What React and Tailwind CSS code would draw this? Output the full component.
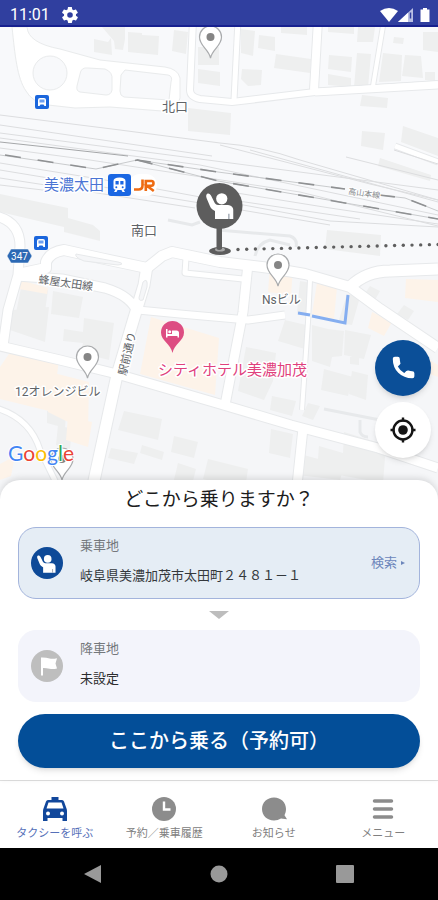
import React from "react";

const FONT = "font-['Roboto','Noto_Sans_CJK_JP',sans-serif]";

/* Streets, drawn twice: a grey casing first, then the white surface. */
const STREETS = [
  { d: "M0 346 L60 360 L117 374 L220 404 L291 425 L378 448 L438 468", w: 9 },
  { d: "M147 266 L144 285 L134 318 L117 375 L92 490", w: 11 },
  { d: "M-4 216 Q20 222 20 246 L18 275 L8 310 L3 346", w: 9 },
  { d: "M18 274 L46 268 L46 262 Q50 252 64 250 L100 258 L147 268 L162 256 L172 252 L220 262 L270 268 L305 274 L350 287 L380 309 L438 348", w: 10 },
  { d: "M350 287 Q366 271 390 271 L438 269", w: 11 },
  { d: "M16 276 L62 279 L105 288 Q132 296 138 314", w: 9 },
  { d: "M138 310 L180 314 L248 320 L285 315", w: 7 },
  { d: "M248 264 L243 312 L225 405", w: 9 },
  { d: "M186 258 L185 273 L243 279", w: 5 },
  { d: "M303 428 L296 495", w: 9 },
  { d: "M310 280 L308 322 L302 410", w: 4 },
  { d: "M-4 408 Q30 418 40 450 L62 495", w: 5 },
  { d: "M193 20 L190 90 Q190 97 200 99 L232 102 L315 92 L438 84", w: 6 },
  { d: "M315 92 L438 85", w: 7 },
  { d: "M238 20 L234 100", w: 5 },
  { d: "M318 20 L314 90", w: 8 },
  { d: "M384 20 L373 86", w: 4 },
  { d: "M395 146 L438 162", w: 5 },
];

const BUILDINGS =
  "M94 39l14 3 3-4 1 17-18-3z M102 27h23v12l-2 11-8-1-1-8z M128 32l14 1v2l17 1-1 19-30-3z M174 30l14 2-2 22-14-3z M198 47h21v18h-21z M198 69l22 3v14l-22-3z" +
  " M241 29l14 2-2 25-12-3z M259 35l16 2v14l-17-3z M276 54l35 5-1 14-36-5z M242 69l20 1-1 15-13 1-7-7z M281 27h26v8l-26-2z M328 27h26v7l-26-2z M358 27h17l-2 15h-16z M329 55l23 2-1 15-23-3z M328 74l23 4v9l-23-2z M357 53l14 1-3 34-14-1z M383 53l19 2-1 26-22 1z M405 55l16 1 2 22-21-2z M394 37l10 1-1 6-10-1z M423 32h15v20l-15-2z M425 72h10v9l-10-1z" +
  " M188 108l43 5-1 22-42-4z M362 95l26 3-1 10-27-2z M362 131l23 2-2 17-22-4z M403 126l35 12v18l-37-14z M380 158l51 17-1 6-52-15z" +
  " M0 194l68 14v10l25 7 7 6v10l-36-9v-5L0 212z M327 230l54 5-1 21-55-7z" +
  " M22 283l26 7-6 43-28-12 2-8z M53 291l30 6-4 21-28-4z M12 310l37-3-4 35-38-13z M84 318l30 5-5 37-28-7 2-10-20-2 1-12 19 3z" +
  " M285 320l21 5-1 24-27-8z M312 325l16 4 16 2-2 25-10 1-2 10-18-6z M345 330l26 5-7 24-20-4z M350 357l9-2v10l-9-1z M246 347l30 6-3 28-9 19-26-9z M324 369l29 8-5 19-27-6z M352 371l16 4-2 25-17-6z M272 396l24 5-4 15-22-6z M308 403l12 3-7 14-11-4z" +
  " M124 411l38 8-4 21-40-10z M174 436l24 6-4 16-23-6z M111 448l27 5-4 11-26-6z M142 445l22 7-2 8-22-7z M208 459l40 10-3 20-42-10z M47 411l19 4-1 13-18-5z M58 425l14 4-2 20-14-4z M271 429l22 5-3 24-21-5z M344 432l42 13-3 38-66-12 2-25 24 7z M300 454l44 12-4 14-42-5z M178 463l18 6-4 16-18-5z" +
  " M300 281l12 2-3 32-12-2z M347 294l13 3-8 28-14-2z M370 286l10 5-5 9-11-5z M404 305l10 6-6 9-11-6z";

const COMMERCIAL =
  "M151 317l68 21-4 57-75-21z M20 280l28 8-1 6-28-5z M270 267l23 2-2 26-23-3z M317 283l20 4-3 32-22-5z M406 279l32 1v22l-33-4z M13 348l46 10-6 54-53-13v-32z M50 372l39 10-1 50-40-20z M68 417l24 5-4 25-22-7z M372 312l20 10-8 14-16-8z M0 464l15-8-4 20-11 4z M421 355l17 10v12l-17-6z";

function Person({ x, y, s, fill }) {
  return (
    <g transform={`translate(${x} ${y}) scale(${s})`}>
      <circle cx="12.600" cy="4.600" r="4.500" fill={fill} />
      <path
        d="M.8.8C-.1 1.500.1 3 .5 4.200L3.200 10.600C3.900 12.300 5.200 13.300 7.200 14.400V20.800H21.800V13.500C21.800 11.200 20 9.800 17.600 9.600H9.600C8.600 9.600 7.600 9 7 8L4.200 2.400C3.400.8 2 0 .8.8Z"
        fill={fill}
      />
      <path d="M18.300 16.500V20.800" stroke="#8a93a0" strokeWidth="0.900" />
    </g>
  );
}

function PlacePin({ x, y }) {
  return (
    <g transform={`translate(${x} ${y})`}>
      <path d="M0 20C-2 11-11 8-11-1A11 11 0 0 1 11-1C11 8 2 11 0 20Z" fill="#fff" stroke="#a9abad" strokeWidth="1.2" />
      <circle cy="-1" r="4" fill="#858585" />
    </g>
  );
}

function BusStop({ x, y }) {
  return (
    <g transform={`translate(${x} ${y})`}>
      <rect width="14" height="14" rx="2" fill="#1b66dc" />
      <path d="M3 11V5q0-2 2-2h4q2 0 2 2v6H9.500L8.500 9.500h-3L4.500 11Z" fill="#fff" />
      <rect x="4.500" y="4.500" width="5" height="3" fill="#6d9ff0" />
    </g>
  );
}

function MapDrawing() {
  const dots = Array.from({ length: 24 }, (_, i) => i);
  return (
    <svg
      className={`absolute inset-0 h-full w-full ${FONT}`}
      viewBox="0 27 438 473"
      preserveAspectRatio="xMidYMin slice"
      role="img"
      aria-label="美濃太田駅周辺の地図"
    >
      <rect width="438" height="500" fill="#f8f9fb" />
      <path d="M0 270H438V500H0Z" fill="#f5f6f8" />
      <path d={BUILDINGS} fill="#eeefef" />
      <path d={COMMERCIAL} fill="#fdf3e9" />

      {/* north side rotary */}
      <path d="M12 27C15 55 17 78 26 91Q32 102 48 105L75 108L110 107L175 112L180 98V78Q178 69 165 67L100 60L60 49Q28 43 27 27Z" fill="#fff" stroke="#e9ebec" />
      <g fill="#f8f9fb" stroke="#e9ebec">
        <circle cx="50" cy="73" r="17" />
        <path d="M80 74Q81 67 88 68L105 69Q113 72 112 80V90Q111 95 106 95L80 92Q76 91 77 86Z" />
        <path d="M125 70L168 75Q173 76 171 82L169 100L124 97Q120 96 120 91L121 75Z" />
      </g>

      <g fill="none" stroke="#e7e9eb" strokeLinejoin="round">
        {STREETS.map((r) => <path key={r.d} d={r.d} strokeWidth={r.w + 2} />)}
      </g>
      <g fill="none" stroke="#fff" strokeLinejoin="round">
        {STREETS.map((r) => <path key={r.d} d={r.d} strokeWidth={r.w} />)}
      </g>
      <g fill="#f5f6f8" stroke="#e7e9eb">
        <path d="M76 254L118 262Q126 264 118 265L84 261Q74 257 76 254Z" />
        <path d="M143 282Q148 277 147 287L143 300Q137 302 140 294Z" />
      </g>
      <g fill="none" stroke="#e7e9eb" strokeWidth="3">
        <path d="M168 220L192 225L200 222" />
        <path d="M218 230L290 236Q298 239 296 247" />
        <path d="M255 256Q258 243 270 240L290 245" />
        <path d="M324 409L380 420M360 420V432Q362 437 368 437" />
      </g>

      {/* tracks */}
      <g fill="none" stroke="#dcdddf" strokeWidth="1">
        <path d="M0 115L120 130L220 143Q260 146 300 160L438 200" />
        <path d="M0 125L212 156" />
        <path d="M0 133L438 190" />
        <path d="M0 138L200 165L438 215" />
        <path d="M0 148L90 160L300 192L438 226" />
        <path d="M0 163L130 184L330 221L438 227" />
        <path d="M0 170L200 203L330 225" />
        <path d="M0 178L195 208" />
        <path d="M0 185L60 192" />
        <path d="M218 190L330 208L438 224" />
        <path d="M218 198L360 219" />
        <path d="M220 145L370 184L438 200" />
        <path d="M250 150L438 202" />
        <path d="M346 157L438 180" />
        <path d="M394 150L438 164" />
      </g>
      <path d="M0 142L65 149L128 156" fill="none" stroke="#a5a7a9" />
      <g fill="none" stroke="#c9cbcd" strokeWidth="1">
        <path d="M0 155L96 169L137 160L218 172L345 189M379 195L405 198L438 211" />
        <path d="M137 160L218 181L438 219" />
      </g>
      <g fill="none" stroke="#8f9193" strokeWidth="1.600" strokeDasharray="16 17">
        <path d="M5 155L96 169L137 160L218 172L345 189" />
        <path d="M137 160L218 181L438 219" />
        <path d="M379 195L405 198L438 211" />
      </g>

      <path d="M298 313L310 315M312 316L345 323L348 295" fill="none" stroke="#85aef0" strokeWidth="3" />

      {/* labels */}
      <g fill="#606367" stroke="#fff" strokeWidth="3" paintOrder="stroke" strokeLinejoin="round" fontSize="13">
        <text x="162" y="111">北口</text>
        <text x="131" y="235">南口</text>
        <text x="262" y="304" fontSize="12">Nsビル</text>
        <text x="15" y="396" fontSize="12">12オレンジビル</text>
        <text x="38" y="283" fontSize="11" transform="rotate(8 38 283)">蜂屋太田線</text>
        <text x="126" y="376" fontSize="11" transform="rotate(-77 126 376)">駅前通り</text>
        <text x="348" y="194" fontSize="8" fill="#85888b" strokeWidth="2" transform="rotate(8 348 194)">高山本線</text>
        <text x="44" y="190" fontSize="15" fill="#4a74d4">美濃太田</text>
        <text x="158" y="375" fontSize="15" fill="#e0407c">シティホテル美濃加茂</text>
      </g>

      <BusStop x={35} y={95} />
      <BusStop x={34} y={236} />

      <path d="M11 249H28L32 256L28 263H11L7 256Z" fill="#2c69b4" stroke="#fff" strokeWidth="0.500" />
      <text x="19.500" y="260" textAnchor="middle" fontSize="10" fill="#fff">347</text>

      {/* station badge */}
      <rect x="129" y="174" width="28" height="22" rx="11" fill="#fff" />
      <rect x="108" y="174" width="23" height="22" rx="3" fill="#1a67e3" />
      <path d="M113.500 188V181q0-3.500 6-3.500t6 3.500v7q0 1.500-2 1.500l1.500 2.500h-2.500l-1-2h-4l-1 2H114l1.500-2.500q-2 0-2-1.500Z" fill="#fff" />
      <path d="M115.500 181h3.200v3.500h-3.200zM120.300 181h3.200v3.500h-3.200z" fill="#1a67e3" />
      <g fill="#1a67e3"><circle cx="116.300" cy="187.200" r="1" /><circle cx="122.700" cy="187.200" r="1" /></g>
      <path d="M134 189.500H138.500Q142.500 189.500 142.500 185.500V179.500M145.800 191V181H151.500Q153.500 181 153.500 183.300T151.500 185.800H147L153.800 191" fill="none" stroke="#ee6b12" strokeWidth="2.600" />

      {/* hotel */}
      <path d="M172.500 353C171 344 161 341 161 332.500A11.500 11.500 0 0 1 184 332.500C184 341 174 344 172.500 353Z" fill="#dd4d82" />
      <path d="M166 329v8.500h1.500V336h10v1.500h1.500V333q0-2.500-2.500-2.500H172v3.500h-4.500V329Z" fill="#fff" />
      <circle cx="169.700" cy="331.700" r="1.500" fill="#fff" />

      <PlacePin x={210.500} y={38} />
      <PlacePin x={278} y={266} />
      <PlacePin x={87.500} y={358} />
      <PlacePin x={62} y={460} />

      {/* pick-up point */}
      <g fill="#5f5f5f">
        {dots.map((i) => <circle key={i} cx={238 + i * 8.700} cy={249.500 - i * 0.220} r="1.700" />)}
      </g>
      <ellipse cx="220" cy="251" rx="11" ry="4" fill="#5d5d5d" />
      <ellipse cx="220" cy="249.500" rx="5" ry="2" fill="#a8a8a8" />
      <path d="M216.500 225h5.500v24q-2.700 2-5.500 0Z" fill="#5d5d5d" />
      <circle cx="219.500" cy="206" r="23" fill="#5d5d5d" />
      <Person x={206} y={193} s={1.250} fill="#fff" />

      <g fontFamily="Lato, sans-serif" fontSize="21" stroke="#fff" strokeWidth="2" paintOrder="stroke">
        <text x="8" y="461">
          <tspan fill="#4285f4">G</tspan><tspan fill="#ea4335">o</tspan><tspan fill="#fbbc05">o</tspan><tspan fill="#4285f4">g</tspan><tspan fill="#34a853">l</tspan><tspan fill="#ea4335">e</tspan>
        </text>
      </g>
    </svg>
  );
}

function StatusBar() {
  return (
    <header className="flex h-[27px] shrink-0 items-center border-b-2 border-[#17208f] bg-[#303f9f] pl-2.5 pr-2 text-white">
      <span className="pt-1 text-base leading-6">11:01</span>
      <svg className="ml-3 mt-1 h-4 w-4" viewBox="2 2 20 20" fill="currentColor" aria-hidden="true">
        <path d="M19.400 13c0-.3.100-.6.100-1s0-.7-.1-1l2.100-1.600c.2-.2.300-.4.100-.7l-2-3.400c-.1-.2-.4-.3-.6-.2l-2.500 1c-.5-.4-1.100-.7-1.700-1l-.4-2.600c0-.3-.2-.5-.5-.5h-4c-.3 0-.5.200-.5.500l-.4 2.600c-.6.300-1.200.6-1.700 1l-2.500-1c-.2-.1-.5 0-.6.200l-2 3.400c-.1.300 0 .5.200.7L4.600 11c0 .3-.1.700-.1 1s0 .7.100 1l-2.200 1.600c-.2.200-.2.500-.1.700l2 3.400c.1.200.4.300.6.200l2.500-1c.5.400 1.100.7 1.700 1l.4 2.600c0 .3.200.5.500.5h4c.3 0 .5-.2.500-.5l.4-2.600c.6-.3 1.200-.6 1.700-1l2.500 1c.2.100.5 0 .6-.2l2-3.400c.1-.2.100-.5-.1-.7ZM12 15.500a3.500 3.500 0 1 1 0-7 3.500 3.500 0 0 1 0 7Z" />
      </svg>
      <svg className="ml-auto mt-1 h-4 w-[50px]" viewBox="0 0 50 16" aria-hidden="true">
        <path d="M0 4Q9 -2 18 4L9 15Z" fill="#fff" />
        <path d="M33 1V15H18Z" fill="#b9bfe4" />
        <path d="M28 5.700V15H18Z" fill="#fff" />
        <path d="M30.500 5.500V11.500" stroke="#303f9f" strokeWidth="1.500" />
        <path d="M40.500 2.500h2.500V1h4v1.500h2.500V15h-9Z" fill="#fff" />
      </svg>
    </header>
  );
}

function BottomTab({ label, active, children }) {
  return (
    <button
      type="button"
      aria-current={active ? "page" : undefined}
      className={`flex flex-1 flex-col items-center gap-[3px] pt-3.5 ${active ? "text-[#11479b]" : "text-[#8c8c8c]"}`}
    >
      <svg className="h-7 w-7" viewBox="0 0 28 28" fill="currentColor" aria-hidden="true">{children}</svg>
      <span className={`whitespace-nowrap text-[11px] leading-4 ${active ? "text-[#5670b8]" : "text-[#808080]"}`}>{label}</span>
    </button>
  );
}

export default function App() {
  return (
    <div className={`flex min-h-screen w-full flex-col bg-white ${FONT}`}>
      <StatusBar />

      <main className="flex flex-1 flex-col">
        <section className="relative min-h-80 flex-1 overflow-hidden">
          <MapDrawing />
          <div className="absolute bottom-[42px] right-[7px] flex flex-col gap-1.5">
            <button type="button" aria-label="電話" className="flex h-14 w-14 items-center justify-center rounded-full bg-[#0b4f98] text-white shadow-md">
              <svg className="h-7 w-7" viewBox="0 0 24 24" fill="currentColor" stroke="currentColor" strokeWidth="1.500" strokeLinejoin="round" aria-hidden="true">
                <path d="M20 15.500c-1.300 0-2.500-.2-3.600-.6-.3-.1-.7 0-1 .2l-2.200 2.200a15 15 0 0 1-6.600-6.600l2.200-2.200c.3-.3.400-.7.200-1-.3-1.100-.5-2.300-.5-3.500 0-.6-.4-1-1-1H5c-.6 0-1 .4-1 1 0 9.400 6.600 16 16 16 .6 0 1-.4 1-1v-2.500c0-.6-.4-1-1-1Z" />
              </svg>
            </button>
            <button type="button" aria-label="現在地" className="flex h-14 w-14 items-center justify-center rounded-full bg-white text-[#151515] shadow-md">
              <svg className="h-7 w-7" viewBox="0 0 28 28" fill="none" stroke="currentColor" strokeWidth="2.400" aria-hidden="true">
                <circle cx="14" cy="14" r="9.500" />
                <circle cx="14" cy="14" r="4.800" fill="currentColor" stroke="none" />
                <path d="M14 1.500v4M14 22.500v4M1.500 14h4M22.500 14h4" />
              </svg>
            </button>
          </div>
        </section>

        <section className="relative -mt-5 flex flex-col rounded-t-[20px] bg-white px-[18px] pb-3 pt-2 shadow-[0_-2px_6px_rgba(0,0,0,0.12)]">
          <h1 className="text-center text-[19px] leading-6 text-[#1c1c1c]">どこから乗りますか？</h1>

          <button type="button" className="mt-[15px] flex h-[72px] items-center rounded-[18px] border border-[#a3b4dc] bg-[#e5edf5] pl-3 pr-3.5 text-left">
            <svg className="h-8 w-8 shrink-0" viewBox="0 0 32 32" aria-hidden="true">
              <circle cx="16" cy="16" r="16" fill="#0e4a98" />
              <Person x={6} y={8} s={0.850} fill="#fff" />
            </svg>
            <span className="ml-[17px] flex min-w-0 flex-1 flex-col gap-2.5 pb-1 text-[13px] leading-5">
              <span className="text-[#74787c]">乗車地</span>
              <span className="truncate text-[#34383c]">岐阜県美濃加茂市太田町２４８１－１</span>
            </span>
            <span className="flex items-center gap-1 text-[13px] text-[#6c86bb]">
              検索
              <svg className="h-1 w-1" viewBox="0 0 4 4" fill="currentColor" aria-hidden="true"><path d="M0 0L4 2L0 4Z" /></svg>
            </span>
          </button>

          <div className="flex h-[31px] items-center justify-center">
            <svg className="h-2 w-5" viewBox="0 0 20 8" fill="#bdbdbd" aria-hidden="true"><path d="M0 0H20L10 8Z" /></svg>
          </div>

          <button type="button" className="flex h-[72px] items-center rounded-[18px] border border-[#f3f4fb] bg-[#f3f4fb] pl-3 pr-3.5 text-left">
            <svg className="h-8 w-8 shrink-0" viewBox="0 0 32 32" aria-hidden="true">
              <circle cx="16" cy="16" r="16" fill="#bebebe" />
              <path d="M10 7.500h1.500q4 .200 7 1t7.500-.2l-1.500 5.200 1.500 5q-4 1-7.500.2t-6.500-.7v7.500h-2Z" fill="#fff" />
            </svg>
            <span className="ml-[17px] flex flex-col gap-2.5 pb-1 text-[13px] leading-5">
              <span className="text-[#74787c]">降車地</span>
              <span className="text-[#2c2c2e]">未設定</span>
            </span>
          </button>

          <button type="button" className="mt-3 h-[54px] rounded-full bg-[#034e98] text-xl font-medium text-white shadow-md">
            ここから乗る（予約可）
          </button>
        </section>
      </main>

      <nav className="flex h-[68px] shrink-0 border-t border-[#e0e0e0] bg-white">
        <BottomTab label="タクシーを呼ぶ" active>
          <path d="M10.500 2h7v3h3.500q1.500 0 2 1.500l2.500 7q.5 1 .5 2.500v10h-4.500v-3h-15v3H2V16q0-1.500.5-2.500l2.500-7Q5.500 5 7 5h3.500Z" />
          <path d="M7.500 7.500h13l2 6h-17Z" fill="#fff" />
          <circle cx="7" cy="18.500" r="2" fill="#fff" />
          <circle cx="21" cy="18.500" r="2" fill="#fff" />
        </BottomTab>
        <BottomTab label="予約／乗車履歴">
          <circle cx="14" cy="14" r="12" />
          <path d="M14 6.500V14.500H20.500" fill="none" stroke="#fff" strokeWidth="2.400" />
        </BottomTab>
        <BottomTab label="お知らせ">
          <path d="M14 2.500c7 0 12 5 12 11.500 0 2.500-.7 4.500-1.500 6.200l2.500 4-6-.7A13 13 0 0 1 14 25.500C7 25.500 2 20.500 2 14S7 2.500 14 2.500Z" />
        </BottomTab>
        <BottomTab label="メニュー">
          <path d="M5.500 6h17M5.500 14h17M5.500 22h17" fill="none" stroke="currentColor" strokeWidth="3.500" strokeLinecap="round" />
        </BottomTab>
      </nav>

      <footer className="flex h-[52px] shrink-0 items-center justify-center gap-[108px] bg-black">
        <button type="button" aria-label="戻る">
          <svg className="h-[18px] w-[18px]" viewBox="0 0 18 18" fill="#999"><path d="M0 9L17 0V18Z" /></svg>
        </button>
        <button type="button" aria-label="ホーム">
          <svg className="h-[18px] w-[18px]" viewBox="0 0 18 18" fill="#999"><circle cx="9" cy="9" r="8.500" /></svg>
        </button>
        <button type="button" aria-label="最近使ったアプリ">
          <svg className="h-[18px] w-[18px]" viewBox="0 0 18 18" fill="#999"><rect width="18" height="18" rx="1" /></svg>
        </button>
      </footer>
    </div>
  );
}
